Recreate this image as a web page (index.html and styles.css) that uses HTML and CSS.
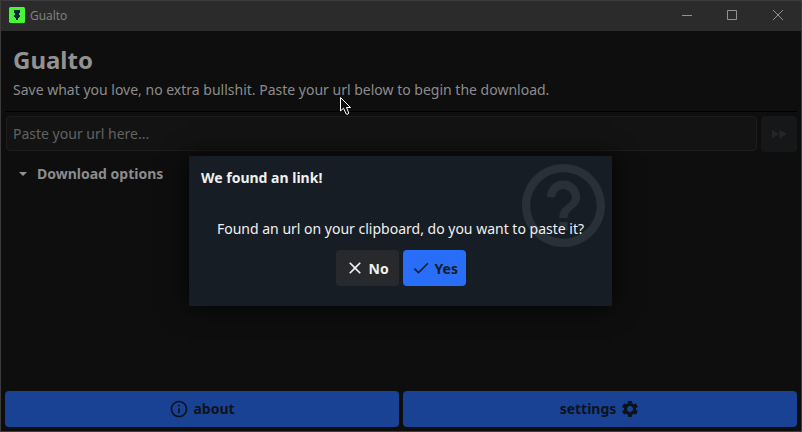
FILE: index.html
```html
<!DOCTYPE html>
<html lang="en">
<head>
<meta charset="utf-8">
<title>Gualto</title>
<link rel="stylesheet" href="styles.css">
</head>
<body>
<div class="window">
  <header class="titlebar">
    <svg class="app-icon" viewBox="0 0 16 16"><rect width="16" height="16" rx="1.500" fill="#45f735"/><path d="M5 3h6v3h-1v2h1v2h-1v1H9v2H7v-2H6v-1H5V8h1V6H5z" fill="#10203a"/></svg>
    <span class="app-name">Gualto</span>
    <div class="window-controls">
      <svg viewBox="0 0 12 12"><path d="M1 6.500h10"/></svg>
      <svg viewBox="0 0 12 12"><path d="M1.500 1.500h9v9h-9z"/></svg>
      <svg viewBox="0 0 12 12"><path d="M1 1l10 10M11 1L1 11"/></svg>
    </div>
  </header>
  <main class="content">
    <h1>Gualto</h1>
    <p class="subtitle">Save what you love, no extra bullshit. Paste your url below to begin the download.</p>
    <div class="separator"></div>
    <div class="url-row">
      <div class="url-input">Paste your url here...</div>
      <div class="go"><svg viewBox="0 0 14 10"><path d="M0 .5L7 5 0 9.500zM7.500.5l7 4.500-7 4.500z"/></svg></div>
    </div>
    <div class="options"><svg viewBox="0 0 8 4"><path d="M0 0h8L4 4z"/></svg><span>Download options</span></div>
    <footer class="actions">
      <div class="action"><svg viewBox="0 0 24 24"><path d="M11 7h2v2h-2zm0 4h2v6h-2zm1-9C6.480 2 2 6.480 2 12s4.480 10 10 10 10-4.480 10-10S17.520 2 12 2zm0 18c-4.410 0-8-3.590-8-8s3.590-8 8-8 8 3.590 8 8-3.590 8-8 8z"/></svg><span>about</span></div>
      <div class="action"><span>settings</span><svg viewBox="0 0 24 24"><path d="M19.140 12.940c.04-.3.060-.61.060-.94 0-.32-.02-.64-.07-.94l2.030-1.580c.18-.14.230-.41.120-.61l-1.920-3.320c-.12-.22-.37-.29-.59-.22l-2.390.96c-.5-.38-1.030-.7-1.620-.94l-.36-2.540c-.04-.24-.24-.41-.48-.41h-3.840c-.24 0-.43.170-.47.410l-.36 2.540c-.59.240-1.130.570-1.620.940l-2.390-.96c-.22-.08-.47 0-.59.220L2.740 8.870c-.12.210-.08.470.120.610l2.030 1.580c-.05.3-.09.630-.09.940s.02.640.070.940l-2.030 1.580c-.18.140-.23.410-.12.610l1.920 3.320c.12.220.37.290.59.220l2.390-.96c.5.380 1.030.7 1.620.940l.36 2.540c.05.240.24.410.48.410h3.840c.24 0 .44-.17.470-.41l.36-2.540c.59-.24 1.130-.56 1.620-.94l2.390.96c.22.080.47 0 .59-.22l1.920-3.320c.12-.22.070-.47-.12-.61l-2.010-1.580zM12 15.600c-1.980 0-3.600-1.620-3.600-3.600s1.620-3.600 3.600-3.600 3.600 1.620 3.600 3.600-1.620 3.600-3.600 3.600z"/></svg></div>
    </footer>
  </main>
</div>
<div class="dialog">
  <svg class="watermark" viewBox="2 2 20 20"><path d="M11 18h2v-2h-2v2zm1-16C6.480 2 2 6.480 2 12s4.480 10 10 10 10-4.480 10-10S17.520 2 12 2zm0 18c-4.410 0-8-3.590-8-8s3.590-8 8-8 8 3.590 8 8-3.590 8-8 8zm0-14c-2.210 0-4 1.790-4 4h2c0-1.100.9-2 2-2s2 .9 2 2c0 2-3 1.750-3 5h2c0-2.250 3-2.500 3-5 0-2.210-1.790-4-4-4z"/></svg>
  <h2>We found an link!</h2>
  <p>Found an url on your clipboard, do you want to paste it?</p>
  <div class="choices">
    <div class="choice no"><svg viewBox="0 0 24 24"><path d="M19 6.410L17.590 5 12 10.590 6.410 5 5 6.410 10.590 12 5 17.590 6.410 19 12 13.410 17.590 19 19 17.590 13.410 12z"/></svg><span>No</span></div>
    <div class="choice yes"><svg viewBox="0 0 24 24"><path d="M9 16.170L4.830 12l-1.420 1.410L9 19 21 7l-1.410-1.410z"/></svg><span>Yes</span></div>
  </div>
</div>
<svg class="cursor" viewBox="0 0 12 20"><path d="M.5 1.500v13.500l3-2.800 2.700 5.800q1.800 1.200 2.600-1L6.500 11.500h4z"/></svg>
</body>
</html>
```
FILE: styles.css
```css
* { box-sizing: border-box; }
body {
  margin: 0;
  width: 802px;
  height: 432px;
  overflow: hidden;
  position: relative;
  background: #3c3c3c;
  padding: 1px;
  font: 14px/20px "Noto Sans", sans-serif;
  color: #8c8c8c;
}
svg { display: block; flex: none; }
h1, h2, p { margin: 0; }
.window { height: 430px; display: flex; flex-direction: column; background: #0e0e0e; }
.titlebar {
  height: 30px;
  display: flex;
  align-items: center;
  padding: 0 17px 0 8px;
  background: #2b2b2b;
}
.app-icon { width: 16px; height: 16px; margin-top: -2px; }
.app-name { font: 12px/16px "Open Sans", sans-serif; margin-left: 5px; color: #858585; }
.window-controls { display: flex; gap: 34px; margin: -2px 0 0 auto; }
.window-controls svg { width: 12px; height: 12px; fill: none; stroke: #929292; }
.window-controls svg:first-child { margin-right: -1px; }
.content { flex: 1; display: flex; flex-direction: column; padding: 0 4px 4px; }
h1 { font-size: 24px; line-height: 34px; margin: 12px 8px 0; color: #929292; }
.subtitle { margin: 3px 8px 0; white-space: nowrap; }
.separator { height: 1px; background: #000; margin-top: 11px; }
.url-row { display: flex; gap: 4px; margin-top: 4px; }
.url-input {
  flex: 1;
  height: 35px;
  margin-left: 1px;
  padding: 7px 6px;
  border: 1px solid #1d1d1e;
  border-radius: 4px;
  background: #131314;
  color: #626262;
}
.go { width: 36px; height: 36px; border-radius: 4px; background: #161718; display: grid; place-items: center; }
.go svg { width: 14px; height: 10px; fill: #252627; }
.options { display: flex; align-items: center; gap: 10px; margin: 12px 14px; font-weight: bold; }
.options svg { width: 8px; height: 4px; fill: #929292; }
.actions { display: flex; gap: 4px; margin-top: auto; }
.action {
  flex: 1;
  height: 36px;
  display: flex;
  align-items: center;
  justify-content: center;
  gap: 4px;
  border-radius: 4px;
  background: #1a4294;
  color: #0d131c;
  font-weight: bold;
}
.action svg { width: 20px; height: 20px; fill: #0d131c; }
.dialog {
  position: absolute;
  left: 189px;
  top: 156px;
  width: 423px;
  height: 150px;
  padding: 12px;
  background: #171d24;
  color: #f0f0f0;
  box-shadow: 0 0 24px rgba(0, 0, 0, .8);
}
.dialog h2 { font-size: 14px; line-height: 20px; }
.dialog p { margin-top: 31px; text-align: center; position: relative; white-space: nowrap; }
.watermark { position: absolute; top: 8px; right: 7px; width: 83px; height: 83px; fill: #2a3038; }
.choices { display: flex; justify-content: center; gap: 4px; margin-top: 11px; position: relative; }
.choice {
  width: 63px;
  height: 36px;
  display: flex;
  align-items: center;
  gap: 4px;
  padding-left: 9px;
  border-radius: 4px;
  font-weight: bold;
}
.choice span { padding-top: 2px; }
.choice svg { width: 20px; height: 20px; fill: currentColor; }
.no { background: #28292c; }
.yes { background: #296ef9; color: #171d24; padding-left: 8px; }
.cursor { position: absolute; left: 340px; top: 96px; width: 12px; height: 20px; fill: #0e0e0e; stroke: #fff; }
```
